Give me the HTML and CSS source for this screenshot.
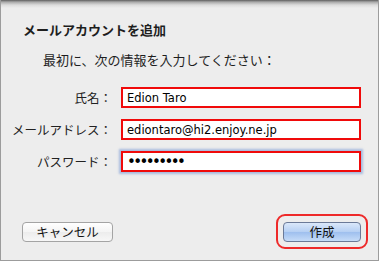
FILE: index.html
```html
<!DOCTYPE html>
<html lang="ja">
<head>
    <meta charset="UTF-8">
    <meta name="viewport" content="width=device-width, initial-scale=1.0">
    <title>メールアカウントを追加</title>
    <link rel="stylesheet" href="styles.css">
</head>
<body>
 <div id="sheet">
    <h1 id="titulo">メールアカウントを追加</h1>
    <p id="aviso">最初に、次の情報を入力してください：</p>

    <div id="formulario">
        <label class="rotulo" for="nome">氏名：</label>
        <input class="campo" id="nome" type="text" value="Edion Taro" readonly>

        <label class="rotulo" for="email">メールアドレス：</label>
        <input class="campo" id="email" type="text" value="ediontaro@hi2.enjoy.ne.jp" readonly>

        <label class="rotulo" for="senha">パスワード：</label>
        <input class="campo foco" id="senha" type="password" value="123456789" readonly>
    </div>

    <div id="botoes">
        <button class="botao" id="cancelar">キャンセル</button>
        <span id="destaque"><button class="botao" id="criar">作成</button></span>
    </div>
 </div>
</body>
</html>
```

FILE: styles.css
```css
* {
    font-family: "Noto Sans CJK JP", "DejaVu Sans", sans-serif;
    box-sizing: border-box;
}

body {
    margin: 0;
    background-color: #ffffff;
}

#sheet {
    width: 379px;
    height: 261px;
    border: 1px solid #9c9c9c;
    border-top: none;
    background: linear-gradient(#5e5e5e 0, #a9a9a9 2px, #dcdcdc 5px, #ededed 8px);
    color: #1e1e1e;
}

#titulo {
    margin: 0;
    padding: 21px 0 0 22px;
    font-size: 13px;
    line-height: 18px;
    font-weight: 700;
}

#aviso {
    margin: 12px 0 0;
    padding-left: 42px;
    font-size: 13px;
    line-height: 18px;
}

#formulario {
    display: grid;
    grid-template-columns: 111px 240px;
    column-gap: 9px;
    row-gap: 11px;
    margin-top: 18px;
    align-items: center;
}

.rotulo {
    justify-self: end;
    font-size: 12.5px;
    line-height: 21px;
    color: #222;
}

.campo {
    width: 240px;
    height: 21px;
    margin: 0;
    border: 2px solid #f00a0a;
    border-radius: 0;
    padding: 0 0 0 4px;
    background-color: #fff;
    font-family: "DejaVu Sans", sans-serif;
    font-size: 11.5px;
    color: #000;
    outline: none;
}
.foco {
    box-shadow: 0 0 2px 2px rgba(110, 145, 210, .55);
    font-size: 15px;
    letter-spacing: -2.6px;
}

#botoes {
    display: flex;
    align-items: center;
    justify-content: space-between;
    margin-top: 42px;
    padding: 0 10px 0 21px;
}

.botao {
    height: 20px;
    margin: 0;
    padding: 0;
    border-radius: 4px;
    font-size: 12.5px;
    line-height: 18px;
    color: #111;
}
#cancelar {
    width: 91px;
    border: 1px solid #a4a4a4;
    background: linear-gradient(#ffffff, #f4f4f4 50%, #ececec 51%, #f7f7f7);
}

#destaque {
    display: block;
    padding: 6px 5px 5px;
    border: 2px solid #ee2a2a;
    border-radius: 9px;
}
#criar {
    display: block;
    width: 78px;
    border: 1px solid #6b7a98;
    background: linear-gradient(#dbe8fa, #b5cff3 50%, #9ebfee 51%, #c6dcf8);
}
```
